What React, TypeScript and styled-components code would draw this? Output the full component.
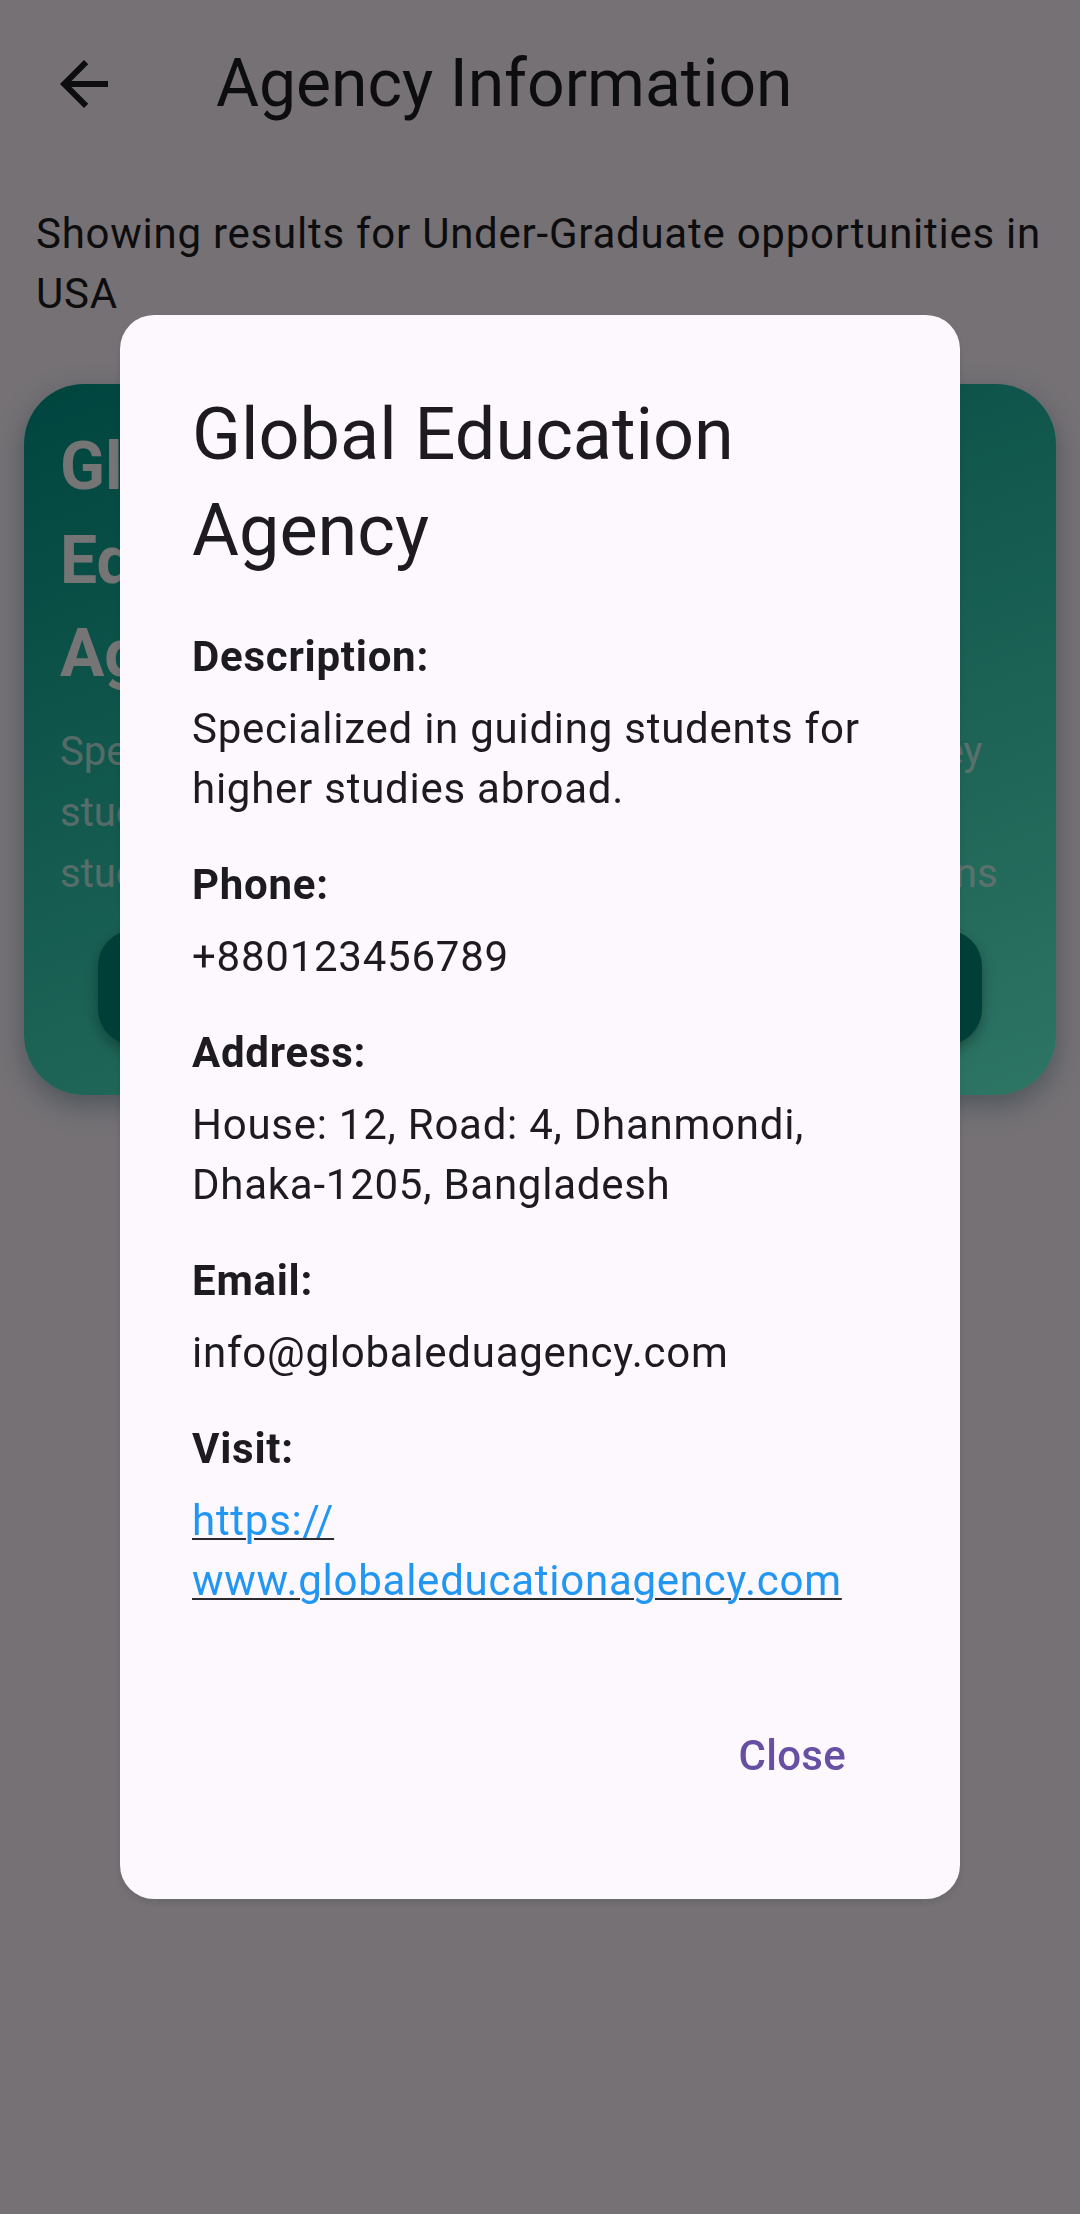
import styled, { createGlobalStyle } from 'styled-components'

const GlobalStyle = createGlobalStyle`
    html, body {
        margin: 0;
        padding: 0;
        background: #fef7ff;
    }
    body {
        font-family: Roboto, "Noto Sans", "Liberation Sans", sans-serif;
        color: #1d1b20;
    }
`

const Page = styled.div`
    width: 1080px;
    min-height: 2214px;
    background: #fef7ff;
`

const AppBar = styled.header`
    height: 168px;
    display: flex;
    align-items: center;
`

const BackButton = styled.button`
    width: 168px;
    height: 168px;
    display: flex;
    align-items: center;
    justify-content: center;
    border: none;
    background: none;
    padding: 0;
    color: #1d1b20;
`

const AppTitle = styled.h1`
    margin: 0 0 0 48px;
    font-size: 66px;
    line-height: 84px;
    font-weight: 400;
`

const Subtitle = styled.p`
    margin: 0;
    padding: 36px 36px 0;
    font-size: 42px;
    line-height: 60px;
    letter-spacing: 0.75px;
`

const Card = styled.div`
    margin: 60px 24px 0;
    padding: 36px 36px 50px;
    border-radius: 60px;
    background: linear-gradient(160deg, #009688 0%, #64ffda 100%);
    box-shadow: 0 10px 28px rgba(0, 70, 90, 0.35);
`

const CardTitle = styled.h2`
    margin: 0;
    max-width: 480px;
    font-size: 66px;
    line-height: 93.5px;
    font-weight: 700;
    color: #ffffff;
`

const CardText = styled.p`
    margin: 20px 0 0;
    font-size: 40px;
    line-height: 61px;
    color: rgba(255, 255, 255, 0.7);
`

const CardButton = styled.div`
    margin: 26px 38px 0;
    height: 115px;
    border-radius: 36px;
    background: #00897b;
    box-shadow: 0 6px 14px rgba(0, 0, 0, 0.3);
    display: flex;
    align-items: center;
    justify-content: center;
    color: #ffffff;
    font-size: 42px;
    font-weight: 700;
`

const Scrim = styled.div`
    position: fixed;
    inset: 0;
    background: rgba(0, 0, 0, 0.54);
    display: flex;
    align-items: center;
    justify-content: center;
`

const Dialog = styled.div`
    width: 840px;
    box-sizing: border-box;
    padding: 72px 72px 72px;
    border-radius: 34px;
    background: #fdf7fe;
    box-shadow: 0 4px 10px rgba(0, 0, 0, 0.1);
    display: flex;
    flex-direction: column;
`

const DialogTitle = styled.h2`
    margin: 0;
    font-size: 72px;
    line-height: 96px;
    font-weight: 400;
    color: #1d1b20;
`

const InfoList = styled.div`
    margin-top: 48px;
    display: flex;
    flex-direction: column;
    gap: 36px;
`

const InfoItem = styled.div`
    display: flex;
    flex-direction: column;
    gap: 12px;
`

const Label = styled.div`
    font-size: 42px;
    line-height: 60px;
    font-weight: 700;
    letter-spacing: 0.75px;
    color: #1d1b20;
`

const Value = styled.div`
    font-size: 42px;
    line-height: 60px;
    letter-spacing: 0.75px;
    color: #1d1b20;
`

const LinkValue = styled.a`
    font-size: 42px;
    line-height: 60px;
    letter-spacing: 0.75px;
    color: #2196f3;
    text-decoration: underline;
    text-decoration-color: #2b2b2e;
    text-decoration-thickness: 2px;
    text-underline-offset: 3px;
`

const Actions = styled.div`
    margin-top: 72px;
    height: 144px;
    display: flex;
    align-items: center;
    justify-content: flex-end;
`

const TextButton = styled.button`
    height: 120px;
    padding: 0 42px;
    border: none;
    background: none;
    font-family: inherit;
    font-size: 42px;
    font-weight: 500;
    letter-spacing: 0.3px;
    color: #6750a4;
`

const info = [
    { label: 'Description:', value: 'Specialized in guiding students for higher studies abroad.' },
    { label: 'Phone:', value: '+880123456789' },
    { label: 'Address:', value: 'House: 12, Road: 4, Dhanmondi, Dhaka-1205, Bangladesh' },
    { label: 'Email:', value: 'info@globaleduagency.com' }
]

const App = function() {
    return (
        <Page>
            <GlobalStyle />
            <AppBar>
                <BackButton aria-label="Back">
                    <svg width="72" height="72" viewBox="0 0 24 24" fill="currentColor">
                        <path d="M20 11H7.83l5.59-5.59L12 4l-8 8 8 8 1.41-1.41L7.83 13H20v-2z" />
                    </svg>
                </BackButton>
                <AppTitle>Agency Information</AppTitle>
            </AppBar>
            <Subtitle>Showing results for Under-Graduate opportunities in USA</Subtitle>
            <Card>
                <CardTitle>Global Education Agency</CardTitle>
                <CardText>
                    Specialized in guiding students for an easier journey studying abroad with complete, expert support for studies, scholarships, student visas, plus admissions
                </CardText>
                <CardButton>View Details</CardButton>
            </Card>
            <Scrim>
                <Dialog>
                    <DialogTitle>Global Education Agency</DialogTitle>
                    <InfoList>
                        {info.map(item => (
                            <InfoItem key={item.label}>
                                <Label>{item.label}</Label>
                                <Value>{item.value}</Value>
                            </InfoItem>
                        ))}
                        <InfoItem>
                            <Label>Visit:</Label>
                            <Value>
                                <LinkValue href="#">https://<wbr />www.globaleducationagency.com</LinkValue>
                            </Value>
                        </InfoItem>
                    </InfoList>
                    <Actions>
                        <TextButton>Close</TextButton>
                    </Actions>
                </Dialog>
            </Scrim>
        </Page>
    )
}

export default App
